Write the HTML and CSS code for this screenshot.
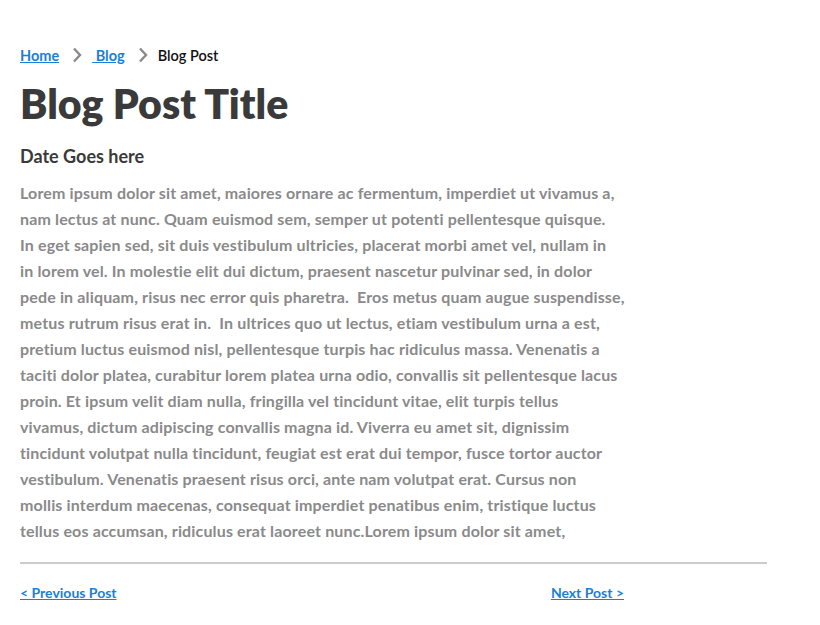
FILE: index.html
```html
<!DOCTYPE html>
<html lang="en">
<head>
<meta charset="utf-8">
<title>Blog Post</title>
<link rel="stylesheet" href="styles.css">
</head>
<body>
<main class="page">
  <nav class="crumbs">
    <a href="#" class="crumb-link">Home</a>
    <svg class="chev" viewBox="0 0 10 16" width="10" height="16"><path d="M2 1.5 L8 8 L2 14.5" fill="none" stroke="#8a8a8a" stroke-width="2.4"/></svg>
    <a href="#" class="crumb-link">&nbsp;Blog</a>
    <svg class="chev" viewBox="0 0 10 16" width="10" height="16"><path d="M2 1.5 L8 8 L2 14.5" fill="none" stroke="#8a8a8a" stroke-width="2.4"/></svg>
    <span class="crumb-current">Blog Post</span>
  </nav>
  <h1 class="title">Blog Post Title</h1>
  <h2 class="date">Date Goes here</h2>
  <p class="body-text">Lorem ipsum dolor sit amet, maiores ornare ac fermentum, imperdiet ut vivamus a,<br>
nam lectus at nunc. Quam euismod sem, semper ut potenti pellentesque quisque.<br>
In eget sapien sed, sit duis vestibulum ultricies, placerat morbi amet vel, nullam in<br>
in lorem vel. In molestie elit dui dictum, praesent nascetur pulvinar sed, in dolor<br>
pede in aliquam, risus nec error quis pharetra. &nbsp;Eros metus quam augue suspendisse,<br>
metus rutrum risus erat in. &nbsp;In ultrices quo ut lectus, etiam vestibulum urna a est,<br>
pretium luctus euismod nisl, pellentesque turpis hac ridiculus massa. Venenatis a<br>
taciti dolor platea, curabitur lorem platea urna odio, convallis sit pellentesque lacus<br>
proin. Et ipsum velit diam nulla, fringilla vel tincidunt vitae, elit turpis tellus<br>
vivamus, dictum adipiscing convallis magna id. Viverra eu amet sit, dignissim<br>
tincidunt volutpat nulla tincidunt, feugiat est erat dui tempor, fusce tortor auctor<br>
vestibulum. Venenatis praesent risus orci, ante nam volutpat erat. Cursus non<br>
mollis interdum maecenas, consequat imperdiet penatibus enim, tristique luctus<br>
tellus eos accumsan, ridiculus erat laoreet nunc.Lorem ipsum dolor sit amet,</p>
  <hr class="rule">
  <div class="pager">
    <a href="#" class="pager-link">&lt; Previous Post</a>
    <a href="#" class="pager-link">Next Post &gt;</a>
  </div>
</main>
</body>
</html>
```

FILE: styles.css
```css
html, body {
  margin: 0;
  padding: 0;
  background: #ffffff;
}
body {
  font-family: "Lato", "Noto Sans", sans-serif;
  color: #3a3a3a;
}
.page {
  padding: 44px 0 0 20px;
  width: 747px;
}
.crumbs {
  display: flex;
  align-items: center;
  height: 22px;
  font-size: 14.5px;
  font-weight: 700;
}
.crumb-link {
  color: #1a7fd6;
  text-decoration: underline;
}
.chev {
  margin: 0 10px 0 13px;
}
.crumb-current {
  color: #111111;
  font-weight: 600;
}
.title {
  margin: 12px 0 0 0;
  font-size: 41px;
  line-height: 52px;
  font-weight: 800;
  color: #3a3a3a;
}
.date {
  margin: 14px 0 0 0;
  font-size: 18px;
  line-height: 24px;
  font-weight: 700;
  color: #3a3a3a;
}
.body-text {
  margin: 12px 0 0 0;
  white-space: nowrap;
  font-size: 16px;
  letter-spacing: 0.15px;
  line-height: 26px;
  font-weight: 700;
  color: #8a8a8a;
}
.rule {
  margin: 18px 0 0 0;
  border: 0;
  height: 2px;
  background: #cccccc;
}
.pager {
  display: flex;
  justify-content: space-between;
  width: 604px;
  margin-top: 20px;
  font-size: 14px;
  font-weight: 700;
}
.pager-link {
  color: #1a7fd6;
  text-decoration: underline;
}
```
